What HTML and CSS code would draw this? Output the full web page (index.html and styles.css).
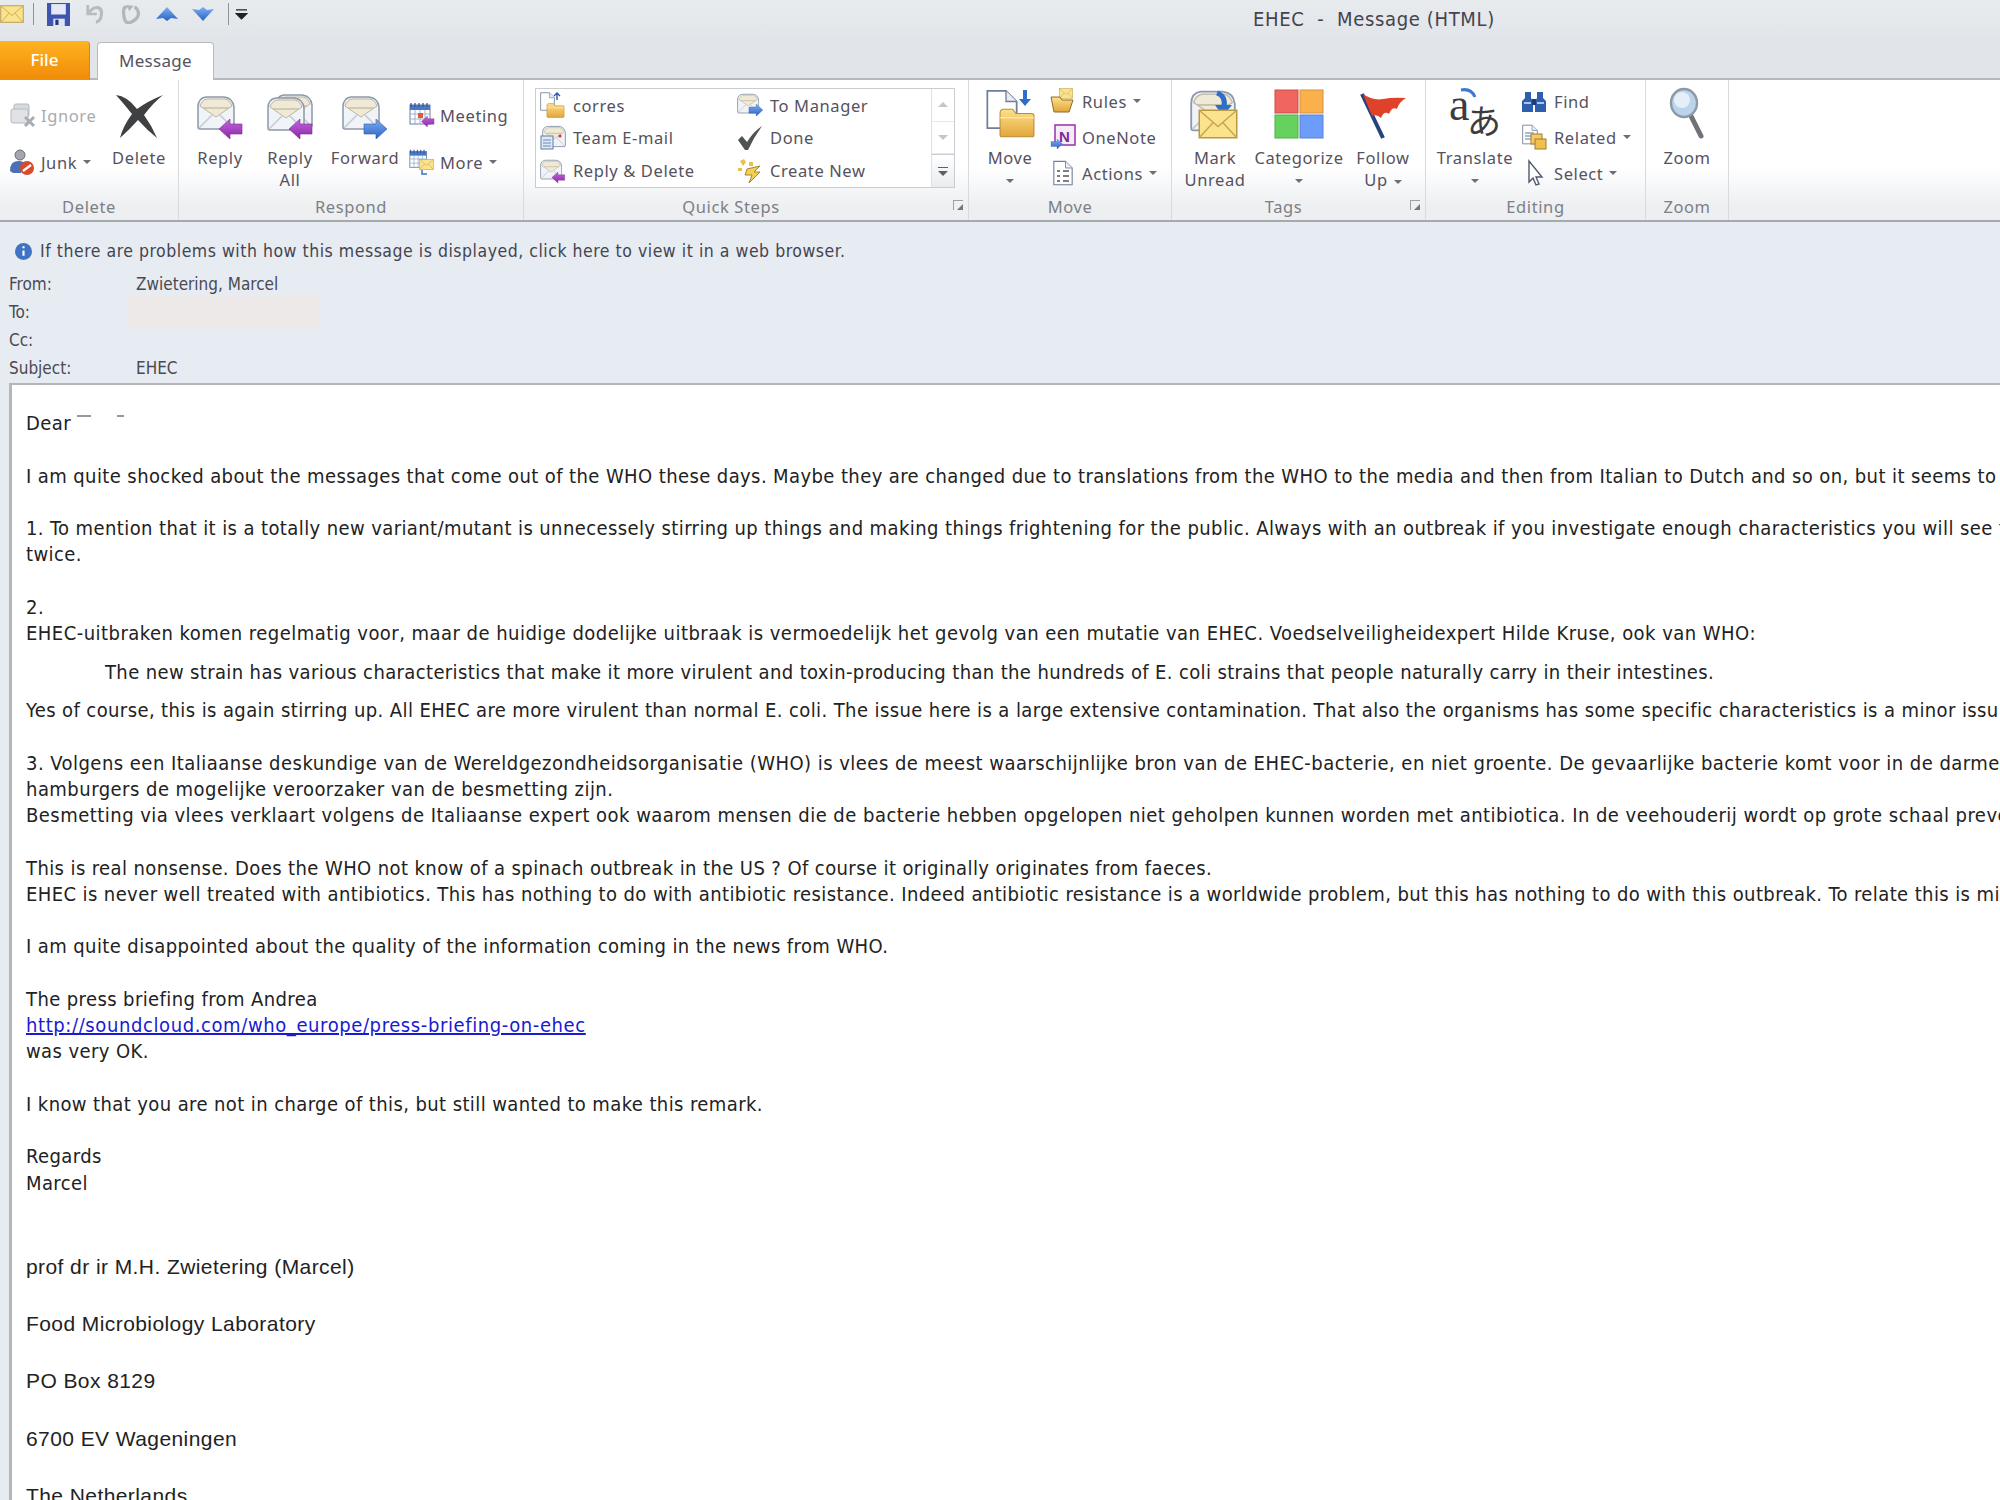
FILE: index.html
```
<!DOCTYPE html>
<html lang="en">
<head>
<meta charset="utf-8">
<title>EHEC - Message (HTML)</title>
<link rel="stylesheet" href="styles.css">
</head>
<body>
<svg class="defs" width="0" height="0" aria-hidden="true">
  <defs>
    <linearGradient id="fold" x1="0" y1="0" x2="0" y2="1"><stop offset="0" stop-color="#ffe08a"/><stop offset="1" stop-color="#e2a63a"/></linearGradient>
    <linearGradient id="blue" x1="0" y1="0" x2="0" y2="1"><stop offset="0" stop-color="#7eb0f2"/><stop offset="1" stop-color="#2a62c4"/></linearGradient>
    <linearGradient id="purp" x1="0" y1="0" x2="0" y2="1"><stop offset="0" stop-color="#c465dc"/><stop offset="1" stop-color="#8a28a8"/></linearGradient>
    <symbol id="mail" viewBox="0 0 38 36">
      <path d="M1 12Q1 3 9 2H27Q36 3 37 12V32Q37 34 35 34H3Q1 34 1 32Z" fill="#f0f3f8" stroke="#8d98a8" stroke-width="1.5"/>
      <path d="M3 11Q5 5 10 4H28Q33 5 35 11L19 22Z" fill="#efe9d6" stroke="#b9b6a6"/>
      <path d="M6 13H32" stroke="#c7c1a8" stroke-width="1.5"/>
      <path d="M2 33L15 20M36 33L23 20" stroke="#c3cad6" stroke-width="1.5"/>
    </symbol>
    <symbol id="arrow-l" viewBox="0 0 24 20"><path d="M0 10L11 0V5H23V15H11V20Z" fill="url(#purp)" stroke="#7d2a96" stroke-width=".6"/></symbol>
    <symbol id="arrow-r" viewBox="0 0 24 20"><path d="M24 10L13 0V5H1V15H13V20Z" fill="url(#blue)" stroke="#2b5aa8" stroke-width=".6"/></symbol>
    <symbol id="cal" viewBox="0 0 24 24">
      <rect x="1" y="3" width="20" height="19" fill="#fff" stroke="#6d7f9e"/>
      <rect x="1" y="3" width="20" height="5" fill="#4a78c8"/>
      <path d="M2 1V5M6 1V5M10 1V5M14 1V5M18 1V5" stroke="#34569a" stroke-width="1.3"/>
      <path d="M1 12H21M1 17H21M6 8V22M11 8V22M16 8V22" stroke="#9fb1cf"/>
    </symbol>
    <symbol id="doc" viewBox="0 0 24 30">
      <path d="M1 1H15L23 9V29H1Z" fill="#fff" stroke="#6f7f96" stroke-width="1.3"/>
      <path d="M15 1V9H23" fill="#e8edf4" stroke="#6f7f96"/>
    </symbol>
    <symbol id="folder" viewBox="0 0 34 28">
      <path d="M1 5Q1 1 4 1H13L16 5H31Q33 5 33 7V25Q33 27 31 27H3Q1 27 1 25Z" fill="url(#fold)" stroke="#b98a3c"/>
      <path d="M1 9H33" stroke="#fff0bf"/>
    </symbol>
    <symbol id="env-y" viewBox="0 0 32 24">
      <rect x="1" y="1" width="30" height="22" fill="#fbe38e" stroke="#b99844" stroke-width="1.2"/>
      <path d="M1 1L16 14L31 1M1 23L12 11M31 23L20 11" fill="none" stroke="#c9a64b" stroke-width="1.2"/>
    </symbol>
  </defs>
</svg>

<div class="window">
  <header class="titlebar">
    <div class="qat">
      <svg class="qat-mail" viewBox="0 0 32 24"><use href="#env-y"/></svg>
      <span class="qat-sep"></span>
      <svg class="qat-save" viewBox="0 0 22 22"><path d="M0 0H22V22H0Z" fill="#3c55b0"/><path d="M4 1H18V11H4Z" fill="#e4e9f5"/><path d="M6 15H17V22H6Z" fill="#dfe3ec"/><path d="M8 16H11V21H8Z" fill="#24327a"/></svg>
      <svg class="qat-i" viewBox="0 0 22 22"><path d="M3 1V11H13" fill="none" stroke="#b7bbc0" stroke-width="3"/><path d="M4 10Q9 3 14 4T18 12T12 20" fill="none" stroke="#b7bbc0" stroke-width="3.4"/></svg>
      <svg class="qat-i" viewBox="0 0 22 22"><path d="M15 3Q20 7 19 12T11 20T3 12T7 4" fill="none" stroke="#b3b7bc" stroke-width="3.6"/><path d="M6 1L14 2L9 8Z" fill="#b3b7bc"/></svg>
      <svg class="qat-i" viewBox="0 0 22 16"><path d="M0 13L11 1L22 13L15 12L11 15L7 12Z" fill="url(#blue)"/></svg>
      <svg class="qat-i" viewBox="0 0 22 16"><path d="M0 3L11 15L22 3L15 4L11 1L7 4Z" fill="url(#blue)"/></svg>
      <span class="qat-sep"></span>
      <svg class="qat-more" viewBox="0 0 14 12"><path d="M1 1H13M1 5H13L7 11Z" fill="#222" stroke="#222" stroke-width="1.2"/></svg>
    </div>
    <h1 class="title">EHEC &nbsp;-&nbsp; Message (HTML)</h1>
  </header>

  <nav class="tabs">
    <div class="tab-file">File</div>
    <div class="tab-msg">Message</div>
  </nav>

  <section class="ribbon">
    <div class="group g-delete">
      <div class="group-body">
        <div class="stack two">
          <div class="small off">
            <svg class="si" viewBox="0 0 26 24"><rect x="5" y="1" width="15" height="13" rx="2" fill="#d7dade" stroke="#b5b8bd"/><rect x="2" y="6" width="17" height="14" rx="2" fill="#e0e2e6" stroke="#b5b8bd"/><path d="M16 14L25 23M25 14L16 23" stroke="#a9acb2" stroke-width="3"/></svg>
            <span>Ignore</span>
          </div>
          <div class="small">
            <svg class="si" viewBox="0 0 26 26"><circle cx="11" cy="6" r="5" fill="#a4a7ad" stroke="#6a6d74"/><path d="M1 22Q1 12 9 12T14 16L12 24H4Z" fill="#4d6fb5"/><circle cx="18" cy="19" r="7" fill="#d94a2a"/><path d="M14 22L22 16" stroke="#fff" stroke-width="2.2"/></svg>
            <span>Junk</span><i class="caret"></i>
          </div>
        </div>
        <div class="large w-del">
          <svg class="li" viewBox="0 0 48 46"><path d="M1 2Q12 3 22 16Q33 8 48 2Q38 10 29 22Q37 33 42 45Q32 37 23 27Q15 36 5 45Q8 33 17 21Q9 11 1 2Z" fill="#3f4042"/></svg>
          <span>Delete</span>
        </div>
      </div>
      <div class="group-label">Delete</div>
    </div>

    <div class="group g-respond">
      <div class="group-body">
        <div class="large w-reply">
          <svg class="li" viewBox="0 0 46 44"><use href="#mail" x="0" y="0" width="38" height="36"/><use href="#arrow-l" x="22" y="24" width="24" height="20"/></svg>
          <span>Reply</span>
        </div>
        <div class="large w-reply">
          <svg class="li" viewBox="0 0 46 44"><use href="#mail" x="8" y="-2" width="38" height="36"/><use href="#mail" x="0" y="1" width="38" height="36"/><use href="#arrow-l" x="22" y="24" width="24" height="20"/></svg>
          <span>Reply<br>All</span>
        </div>
        <div class="large w-fwd">
          <svg class="li" viewBox="0 0 46 44"><use href="#mail" x="0" y="0" width="38" height="36"/><use href="#arrow-r" x="21" y="24" width="24" height="20"/></svg>
          <span>Forward</span>
        </div>
        <div class="stack two">
          <div class="small">
            <svg class="si" viewBox="0 0 26 26"><use href="#cal" width="24" height="24"/><rect x="9" y="11" width="5" height="5" fill="#e05a3a"/><use href="#arrow-l" x="12" y="14" width="14" height="11"/></svg>
            <span>Meeting</span>
          </div>
          <div class="small">
            <svg class="si" viewBox="0 0 26 26"><use href="#cal" width="20" height="20"/><use href="#env-y" x="10" y="10" width="15" height="11"/><path d="M13 21V25H18" fill="none" stroke="#3a6fc4" stroke-width="1.5"/></svg>
            <span>More</span><i class="caret"></i>
          </div>
        </div>
      </div>
      <div class="group-label">Respond</div>
    </div>

    <div class="group g-quick">
      <div class="group-body">
        <div class="gallery">
          <div class="gallery-items">
            <div class="qs"><svg class="si" viewBox="0 0 26 26"><use href="#doc" width="15" height="19"/><path d="M17 8V2M14 4L17 1L20 4" fill="none" stroke="#2b5aa8" stroke-width="1.4"/><use href="#folder" x="6" y="11" width="19" height="15"/></svg><span>corres</span></div>
            <div class="qs"><svg class="si" viewBox="0 0 26 26"><use href="#mail" x="2" y="0" width="24" height="23"/><rect x="1" y="11" width="12" height="13" fill="#dfe8f5" stroke="#5e7da8"/><path d="M3 15H11M3 18H11M3 21H11" stroke="#6a8ab5"/><circle cx="20" cy="11" r="1.6" fill="#d23a3a"/></svg><span>Team E-mail</span></div>
            <div class="qs"><svg class="si" viewBox="0 0 28 26"><use href="#mail" width="24" height="23"/><use href="#arrow-l" x="12" y="14" width="16" height="12"/></svg><span>Reply &amp; Delete</span></div>
            <div class="qs"><svg class="si" viewBox="0 0 28 26"><use href="#mail" width="24" height="23"/><use href="#arrow-r" x="12" y="12" width="16" height="13"/></svg><span>To Manager</span></div>
            <div class="qs"><svg class="si" viewBox="0 0 26 26"><path d="M1 15L5 11L10 17Q16 7 25 1Q17 12 11 25H8Z" fill="#505356"/></svg><span>Done</span></div>
            <div class="qs"><svg class="si" viewBox="0 0 26 26"><path d="M3 3L7 1L9 4L6 8ZM12 4H16V8H12ZM1 10H5V13H1Z" fill="#e9c24a"/><path d="M10 11L23 8L17 14H23L12 25L15 17H8Z" fill="#f2cf55" stroke="#a9842c"/></svg><span>Create New</span></div>
          </div>
          <div class="scroller">
            <div class="sc"><i class="up"></i></div>
            <div class="sc"><i class="dn"></i></div>
            <div class="sc sc-more"><i class="bar"></i><i class="dn dark"></i></div>
          </div>
        </div>
      </div>
      <div class="group-label launch">Quick Steps<i class="launcher"></i></div>
    </div>

    <div class="group g-move">
      <div class="group-body">
        <div class="large w-move">
          <svg class="li" viewBox="0 0 50 50"><use href="#doc" x="1" y="0" width="32" height="43"/><path d="M40 2V13" stroke="#2f6ccc" stroke-width="4"/><path d="M34 11H46L40 18Z" fill="#2f6ccc"/><use href="#folder" x="14" y="20" width="36" height="30"/></svg>
          <span>Move<i class="caret block"></i></span>
        </div>
        <div class="stack three">
          <div class="small"><svg class="si" viewBox="0 0 26 26"><use href="#env-y" x="9" y="0" width="14" height="11"/><path d="M1 9H10L12 12H23L19 24H4Z" fill="url(#fold)" stroke="#8c6a2c"/></svg><span>Rules</span><i class="caret"></i></div>
          <div class="small"><svg class="si" viewBox="0 0 26 26"><rect x="5" y="1" width="20" height="20" fill="#f6ecf8" stroke="#9b3fb0" stroke-width="1.6"/><text x="9" y="18" class="n">N</text><use href="#arrow-r" x="0" y="15" width="13" height="10"/></svg><span>OneNote</span></div>
          <div class="small"><svg class="si" viewBox="0 0 26 26"><use href="#doc" x="3" y="0" width="20" height="26"/><path d="M7 11H10M13 11H19M7 16H10M13 16H19M7 21H10M13 21H19" stroke="#555" stroke-width="1.5"/></svg><span>Actions</span><i class="caret"></i></div>
        </div>
      </div>
      <div class="group-label">Move</div>
    </div>

    <div class="group g-tags">
      <div class="group-body">
        <div class="large w-mark">
          <svg class="li" viewBox="0 0 50 50"><use href="#mail" x="0" y="0" width="46" height="44"/><path d="M27 4Q36 7 34 18" fill="none" stroke="#2f6ccc" stroke-width="5"/><path d="M25 16H42L33 27Z" fill="#2f6ccc"/><use href="#env-y" x="6" y="20" width="44" height="30"/></svg>
          <span>Mark<br>Unread</span>
        </div>
        <div class="large w-cat">
          <svg class="li" viewBox="0 0 48 48"><rect x="0" y="0" width="23" height="23" fill="#f0655f" stroke="#c9504a"/><rect x="25" y="0" width="23" height="23" fill="#fbb04c" stroke="#d1913e"/><rect x="0" y="25" width="23" height="23" fill="#66d25e" stroke="#4fae48"/><rect x="25" y="25" width="23" height="23" fill="#6d9cfa" stroke="#5681d6"/></svg>
          <span>Categorize<i class="caret block"></i></span>
        </div>
        <div class="large w-follow">
          <svg class="li" viewBox="0 0 48 48"><path d="M3 2L24 46" stroke="#27427e" stroke-width="4"/><path d="M4 2Q14 9 24 7T47 6Q40 10 38 17Q33 14 30 22Q25 18 22 26Q18 22 13 24Z" fill="#e0412a"/></svg>
          <span>Follow<br>Up<i class="caret"></i></span>
        </div>
      </div>
      <div class="group-label launch">Tags<i class="launcher"></i></div>
    </div>

    <div class="group g-edit">
      <div class="group-body">
        <div class="large w-trans">
          <svg class="li" viewBox="0 0 56 52"><text x="2" y="32" class="tr-a">a</text><text x="20" y="46" class="tr-b">あ</text><path d="M14 2Q24 0 28 9" fill="none" stroke="#3a7ad0" stroke-width="3"/></svg>
          <span>Translate<i class="caret block"></i></span>
        </div>
        <div class="stack three">
          <div class="small"><svg class="si" viewBox="0 0 26 26"><path d="M4 4H10V10L12 13V24H1V13L4 10ZM16 4H22V10L25 13V24H14V13L16 10Z" fill="#2d5fae"/><path d="M11 11H15V17H11Z" fill="#1c3d7c"/><path d="M3 15H10M16 15H23" stroke="#a9c6ee" stroke-width="2"/></svg><span>Find</span></div>
          <div class="small"><svg class="si" viewBox="0 0 26 26"><use href="#doc" x="1" y="0" width="16" height="21"/><path d="M4 9H13M4 12H13M4 15H13" stroke="#5b78a8"/><rect x="10" y="10" width="11" height="10" fill="#f3cd63" stroke="#a17d2d"/><rect x="14" y="15" width="11" height="10" fill="#f0bf4e" stroke="#a17d2d"/></svg><span>Related</span><i class="caret"></i></div>
          <div class="small"><svg class="si" viewBox="0 0 26 26"><path d="M8 1V22L12 18L15 25L18 24L15 17H21Z" fill="#fff" stroke="#505a6c" stroke-width="1.4"/></svg><span>Select</span><i class="caret"></i></div>
        </div>
      </div>
      <div class="group-label">Editing</div>
    </div>

    <div class="group g-zoom">
      <div class="group-body">
        <div class="large w-zoom">
          <svg class="li" viewBox="0 0 36 50"><path d="M22 28L32 48" stroke="#6f7377" stroke-width="5" stroke-linecap="round"/><ellipse cx="15" cy="15" rx="13" ry="14" fill="#bcd3ec" stroke="#8e99a6" stroke-width="2.4"/><ellipse cx="13" cy="12" rx="8" ry="8" fill="#e5eff9"/></svg>
          <span>Zoom</span>
        </div>
      </div>
      <div class="group-label">Zoom</div>
    </div>
  </section>

  <section class="headers">
    <div class="infobar">
      <svg class="info-i" viewBox="0 0 16 16"><circle cx="8" cy="8" r="8" fill="#3f74c4"/><path d="M8 3V5M8 7V12" stroke="#fff" stroke-width="2"/></svg>
      <span>If there are problems with how this message is displayed, click here to view it in a web browser.</span>
    </div>
    <div class="hrow"><span class="hlabel">From:</span><span class="hval">Zwietering, Marcel</span></div>
    <div class="hrow"><span class="hlabel">To:</span><span class="redact"></span></div>
    <div class="hrow"><span class="hlabel">Cc:</span></div>
    <div class="hrow"><span class="hlabel">Subject:</span><span class="hval">EHEC</span></div>
  </section>

  <main class="mail">
    <p class="line dear">Dear <i class="mark m1"></i><i class="mark m2"></i></p>
    <p>I am quite shocked about the messages that come out of the WHO these days. Maybe they are changed due to translations from the WHO to the media and then from Italian to Dutch and so on, but it seems to</p>
    <p>1. To mention that it is a totally new variant/mutant is unnecessely stirring up things and making things frightening for the public. Always with an outbreak if you investigate enough characteristics you will see t<br>twice.</p>
    <p class="tight wide">2.<br>EHEC-uitbraken komen regelmatig voor, maar de huidige dodelijke uitbraak is vermoedelijk het gevolg van een mutatie van EHEC. Voedselveiligheidexpert Hilde Kruse, ook van WHO:</p>
    <blockquote>The new strain has various characteristics that make it more virulent and toxin-producing than the hundreds of E. coli strains that people naturally carry in their intestines.</blockquote>
    <p>Yes of course, this is again stirring up. All EHEC are more virulent than normal E. coli. The issue here is a large extensive contamination. That also the organisms has some specific characteristics is a minor issu</p>
    <p class="wide">3. Volgens een Italiaanse deskundige van de Wereldgezondheidsorganisatie (WHO) is vlees de meest waarschijnlijke bron van de EHEC-bacterie, en niet groente. De gevaarlijke bacterie komt voor in de darme<br>hamburgers de mogelijke veroorzaker van de besmetting zijn.<br>Besmetting via vlees verklaart volgens de Italiaanse expert ook waarom mensen die de bacterie hebben opgelopen niet geholpen kunnen worden met antibiotica. In de veehouderij wordt op grote schaal preve</p>
    <p>This is real nonsense. Does the WHO not know of a spinach outbreak in the US ? Of course it originally originates from faeces.<br>EHEC is never well treated with antibiotics. This has nothing to do with antibiotic resistance. Indeed antibiotic resistance is a worldwide problem, but this has nothing to do with this outbreak. To relate this is mi</p>
    <p>I am quite disappointed about the quality of the information coming in the news from WHO.</p>
    <p>The press briefing from Andrea<br><a href="#">http://soundcloud.com/who_europe/press-briefing-on-ehec</a><br>was very OK.</p>
    <p>I know that you are not in charge of this, but still wanted to make this remark.</p>
    <p class="regards">Regards<br>Marcel</p>
    <p class="sig">prof dr ir M.H. Zwietering (Marcel)</p>
    <p class="sig">Food Microbiology Laboratory</p>
    <p class="sig">PO Box 8129</p>
    <p class="sig">6700 EV Wageningen</p>
    <p class="sig">The Netherlands</p>
  </main>
</div>
</body>
</html>
```
FILE: styles.css
```
* { box-sizing: border-box; }
html, body { margin: 0; padding: 0; height: 100%; overflow: hidden; }
body { background: #e7ecf2; font-family: "Noto Sans", sans-serif; color: #222; }
.defs { position: absolute; }
.window { width: 2000px; height: 1500px; overflow: hidden; display: flex; flex-direction: column; }

.titlebar { height: 41px; display: flex; background: linear-gradient(#e8ebee, #e1e5e9); align-items: flex-start; }
.qat { display: flex; align-items: center; height: 28px; width: 1253px; flex: none; }
.qat svg { display: block; flex: none; }
.qat-mail { width: 24px; height: 20px; margin-right: 9px; }
.qat-sep { width: 1px; height: 22px; background: #8f9296; }
.qat-save { width: 23px; height: 23px; margin: 0 14px 0 13px; }
.qat-i { width: 22px; height: 20px; margin-right: 14px; }
.qat-more { width: 13px; height: 11px; margin-left: 6px; }
.title { margin: 6px 0 0; font: 400 20px/26px "DejaVu Sans Condensed", "DejaVu Sans", sans-serif; font-stretch: condensed; letter-spacing: .65px; color: #444450; white-space: nowrap; }

.tabs { height: 39px; display: flex; align-items: flex-end; background: #e1e5e9; border-bottom: 2px solid #b6b9bc; }
.tab-file { width: 90px; height: 39px; margin-bottom: -2px; background: linear-gradient(#ffb320, #f28f0a 90%); border-radius: 0 4px 0 0; border-right: 1px solid #c98a2a; color: #fff; font-size: 17px; line-height: 37px; text-align: center; font-weight: 500; }
.tab-msg { width: 117px; height: 38px; margin: 0 0 -2px 7px; background: #fff; border: 1px solid #b8bbbe; border-bottom: none; border-radius: 4px 4px 0 0; color: #55525e; font-size: 17px; line-height: 36px; text-align: center; letter-spacing: .3px; }

.ribbon { height: 142px; display: flex; background: linear-gradient(#fff 0, #fff 62%, #eef0f2 88%, #eceef1 100%); border-bottom: 2px solid #a6a9ad; font-size: 16.5px; color: #55525e; letter-spacing: .6px; }
.group { display: flex; flex-direction: column; border-right: 1px solid #d7dade; flex: none; }
.g-delete { width: 179px; }
.g-respond { width: 345px; }
.g-quick { width: 445px; }
.g-move { width: 203px; }
.g-tags { width: 254px; }
.g-edit { width: 220px; }
.g-zoom { width: 83px; }
.group-body { flex: 1; display: flex; min-height: 0; }
.group-label { height: 30px; padding-top: 4px; line-height: 26px; text-align: center; color: #7c7f86; font-size: 16.5px; position: relative; }
.group-label.launch { padding-right: 30px; }
.launcher { position: absolute; right: 5px; top: 10px; width: 10px; height: 10px; border-left: 1px solid #9da1a7; border-top: 1px solid #9da1a7; }
.launcher::after { content: ""; position: absolute; right: 0; bottom: 0; border: 3px solid transparent; border-right-color: #777; border-bottom-color: #777; }

.large { display: flex; flex-direction: column; align-items: center; text-align: center; padding-top: 15px; line-height: 22px; flex: none; }
.li { width: 46px; height: 44px; flex: none; margin-bottom: 8px; overflow: visible; }
.large > span { display: block; }
.stack { display: flex; flex-direction: column; flex: none; }
.stack.two { gap: 15px; padding-top: 19px; }
.stack.three { gap: 4px; padding-top: 5px; }
.small { display: flex; align-items: center; height: 32px; white-space: nowrap; }
.si { width: 26px; height: 26px; flex: none; margin-right: 6px; overflow: visible; }
.off { color: #a9abb0; }
.caret { display: inline-block; width: 0; height: 0; border: 4px solid transparent; border-top: 4px solid #6c6f75; border-bottom: 0; margin-left: 6px; vertical-align: middle; }
.caret.block { display: block; margin: 10px auto 0; }

.g-delete .group-body { padding-left: 9px; }
.g-delete .stack { width: 100px; }
.w-del { width: 60px; padding-top: 13px; }
.w-del .li { width: 48px; height: 46px; }
.g-respond .group-body { padding-left: 6px; }
.w-reply { width: 70px; }
.w-fwd { width: 80px; margin-right: 4px; }
.g-respond .si { margin-right: 5px; }
.g-quick .group-body { padding: 8px 13px 0 11px; }
.gallery { flex: 1; height: 100px; display: flex; background: #fff; border: 1px solid #c9ccd0; }
.gallery-items { flex: 1; display: grid; grid-template-columns: 197px 1fr; grid-template-rows: repeat(3, 1fr); grid-auto-flow: column; }
.qs { display: flex; align-items: center; padding-left: 4px; white-space: nowrap; }
.qs .si { margin-right: 7px; }
.scroller { width: 23px; display: flex; flex-direction: column; border-left: 1px solid #dfe2e5; }
.sc { flex: 1; display: flex; flex-direction: column; align-items: center; justify-content: center; gap: 3px; border-bottom: 1px solid #e6e8eb; }
.sc-more { background: linear-gradient(#fff, #e9ecef); border: none; border-top: 1px solid #c9ccd0; }
.up { width: 0; height: 0; border: 5px solid transparent; border-bottom: 5px solid #c3c6ca; border-top: 0; }
.dn { width: 0; height: 0; border: 5px solid transparent; border-top: 5px solid #c3c6ca; border-bottom: 0; }
.dn.dark { border-top-color: #5d6066; }
.bar { width: 10px; height: 1px; background: #5d6066; }
.g-move .group-body { padding-left: 5px; }
.w-move { width: 72px; margin-right: 4px; padding-top: 8px; }
.w-move .li { width: 50px; height: 50px; margin-bottom: 9px; }
.g-tags .group-body { padding-left: 5px; }
.w-mark { width: 76px; padding-top: 9px; }
.w-mark .li { width: 50px; height: 50px; }
.w-cat { width: 92px; padding-top: 10px; }
.w-cat .li { width: 48px; height: 48px; margin-bottom: 9px; }
.w-follow { width: 76px; padding-top: 12px; }
.w-follow .li { width: 48px; height: 48px; margin-bottom: 7px; }
.g-edit .group-body { padding-left: 3px; }
.w-trans { width: 92px; padding-top: 8px; }
.w-trans .li { width: 56px; height: 52px; margin-bottom: 7px; }
.g-edit .si { margin-right: 7px; }
.w-zoom { width: 100%; padding-top: 8px; }
.w-zoom .li { width: 36px; height: 50px; margin-bottom: 9px; }
.tr-a { font: 400 46px "Liberation Serif", serif; fill: #3c3c40; }
.tr-b { font: 400 34px "Noto Sans CJK JP", sans-serif; fill: #3c3c40; }
.n { font: 700 15px "Liberation Sans", sans-serif; fill: #7d2a96; }

.headers { height: 161px; font: 400 17px/28px "DejaVu Sans Condensed", "DejaVu Sans", sans-serif; font-stretch: condensed; color: #4a4a52; padding: 15px 0 0 9px; flex: none; }
.infobar { display: flex; align-items: center; height: 28px; margin-bottom: 5px; color: #444450; font-size: 17.5px; letter-spacing: .52px; }
.info-i { width: 17px; height: 17px; margin: 0 8px 0 6px; flex: none; }
.hrow { display: flex; height: 28px; align-items: center; }
.hlabel { width: 127px; flex: none; }
.redact { width: 192px; height: 32px; margin-left: -9px; background: #ece9e8; }

.mail { flex: 1; margin-left: 9px; background: #fff; border-left: 3px solid #b4b6b8; border-top: 2px solid #b4b6b8; padding: 25px 0 0 14px; overflow: hidden; white-space: nowrap; font: 400 20px/26.25px "DejaVu Sans Condensed", "DejaVu Sans", sans-serif; font-stretch: condensed; letter-spacing: .4px; color: #222; }
.mail p { margin: 0 0 26.25px; }
.mail p.tight { margin-bottom: 0; }
.mail p.wide { letter-spacing: .47px; }
.mail blockquote { margin: 12.25px 0; padding-left: 79px; letter-spacing: .37px; }
.mail a { color: #1a1ad0; letter-spacing: .6px; }
.mark { display: inline-block; height: 2px; background: #999; vertical-align: 13px; }
.m1 { width: 14px; }
.m2 { width: 7px; margin-left: 26px; }
.mail p.regards { margin-bottom: 58px; }
.mail p.sig { font-family: "Liberation Sans", sans-serif; font-stretch: normal; margin-bottom: 31px; font-size: 21px; letter-spacing: .42px; }
```
